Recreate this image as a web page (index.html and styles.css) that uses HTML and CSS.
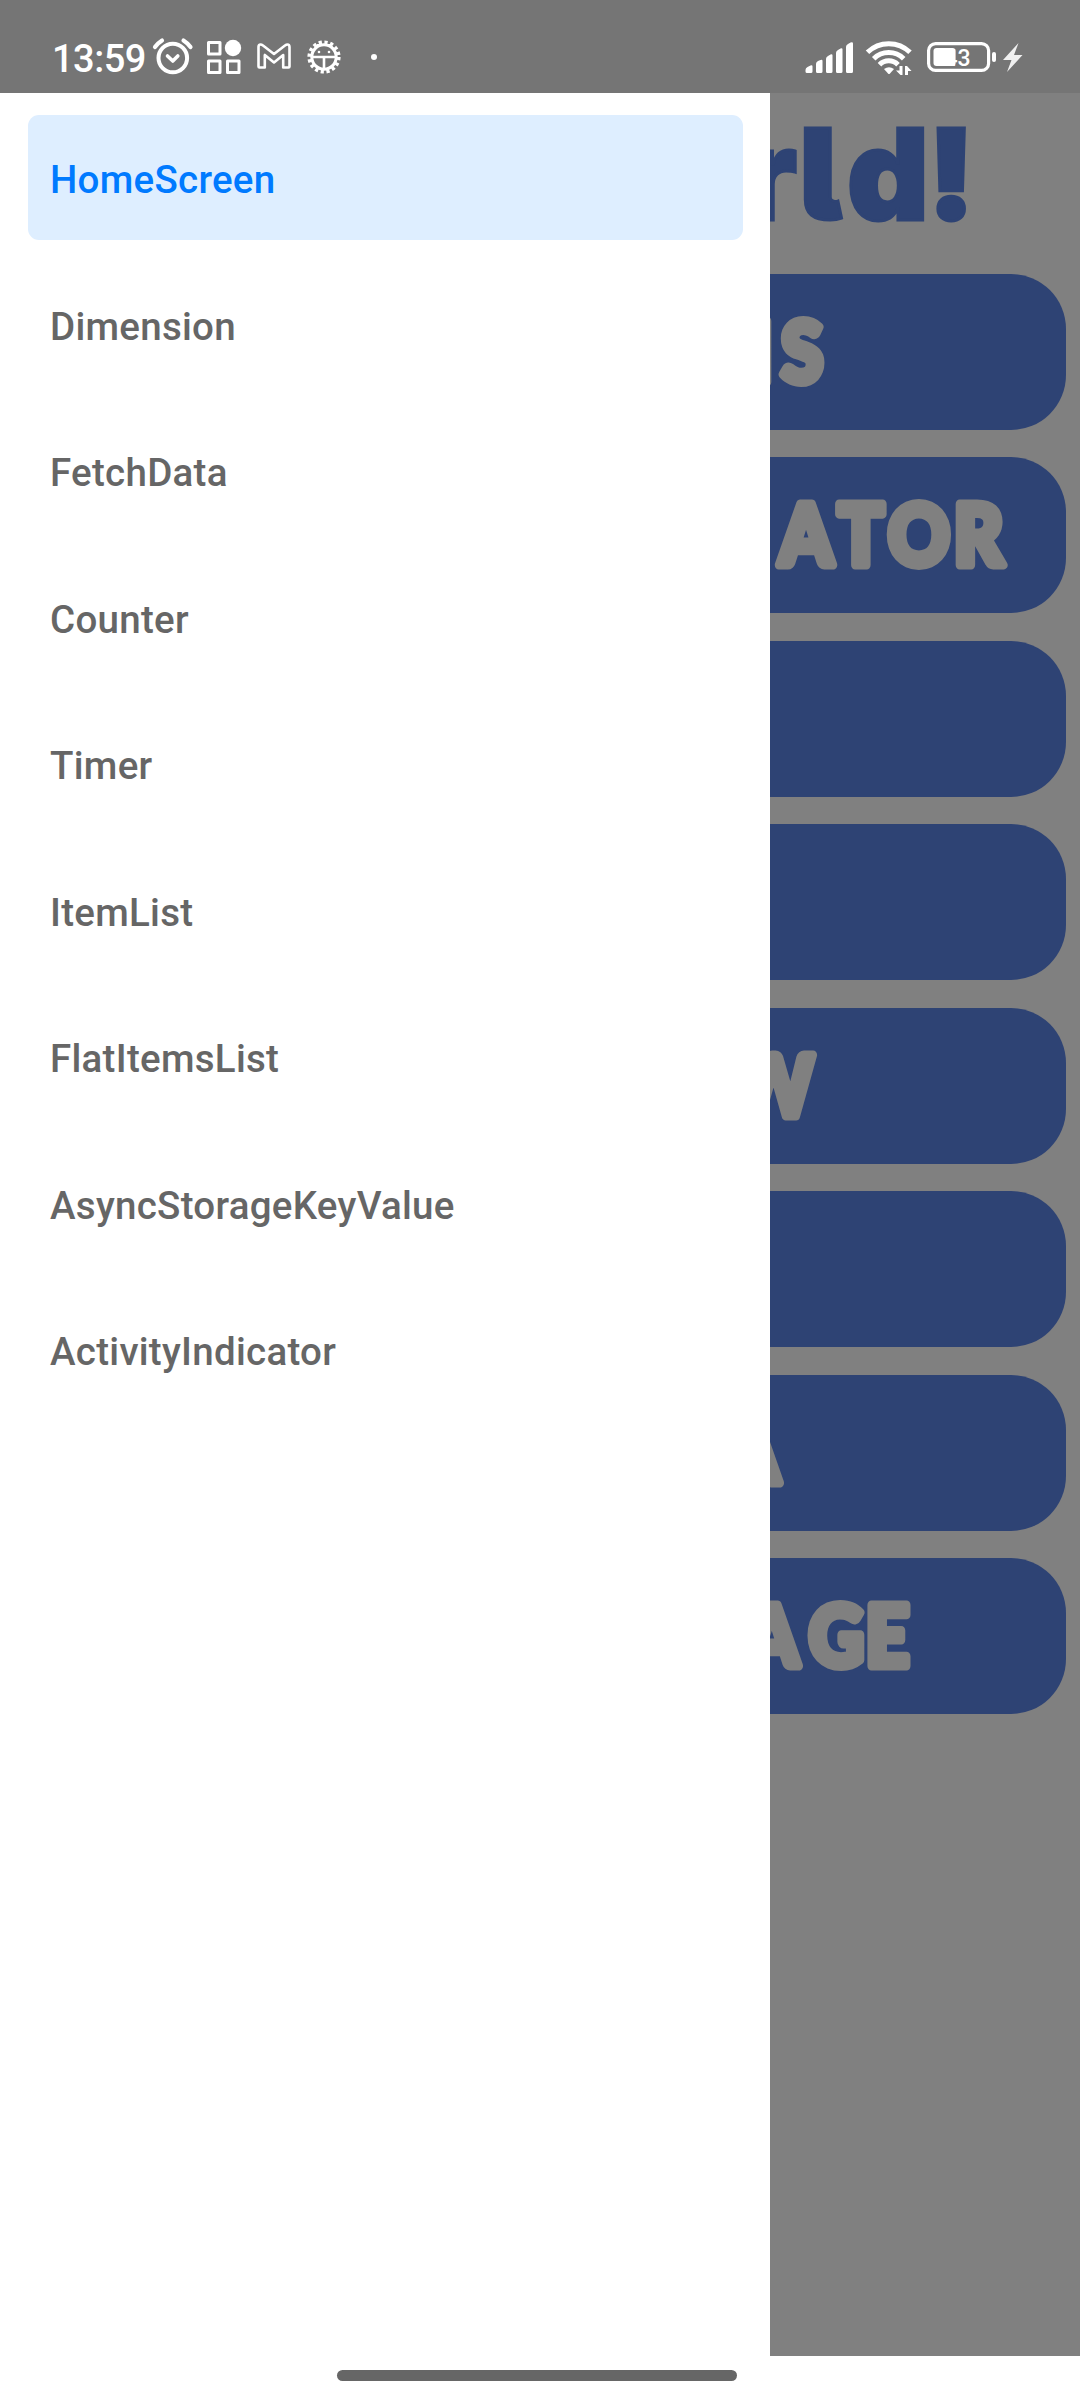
FILE: index.html
```html
<!DOCTYPE html>
<html lang="en">
<head>
<meta charset="utf-8">
<title>HomeScreen</title>
<link rel="stylesheet" href="styles.css">
</head>
<body>
<div class="phone">
  <header class="status">
    <div class="status-left">
      <span class="clock">13:59</span>
      <svg class="ico" width="42" height="93" viewBox="152 0 42 93"><g fill="none" stroke="#fff" stroke-linecap="round"><circle cx="172.8" cy="58" r="14.300" stroke-width="4"/><path d="M155 47q3-4 7-6.500M190.500 47q-3-4-7-6.500" stroke-width="4.200"/><path d="M167.500 56l5.300 5 5-5" stroke-width="3.600" stroke-linejoin="round"/></g></svg>
      <svg class="ico" width="36" height="93" viewBox="206 0 36 93"><g fill="none" stroke="#fff" stroke-width="3" stroke-linejoin="round"><path d="M208.500 42.500h11.500v11.500h-11.500zM208.500 61h11.500v11.500h-11.500zM227.500 61h11.500v11.500h-11.500z"/></g><circle cx="233" cy="48" r="8.200" fill="#fff"/></svg>
      <svg class="ico ico-mail" width="36" height="93" viewBox="256 0 36 93"><path d="M259.500 67.500a1 1 0 0 1-1-1V47q0-2.500 2-2.500 1.200 0 2.500 1L274 54l11-8.500q1.300-1 2.500-1 2 0 2 2.500v19.500a1 1 0 0 1-1 1h-5.300V55L274 62.500 264.800 55v12.500z" fill="none" stroke="#fff" stroke-width="2.600" stroke-linejoin="round"/></svg>
      <svg class="ico ico-bug" width="36" height="93" viewBox="306 0 36 93"><g fill="none" stroke="#fff"><circle cx="324" cy="57" r="12.200" stroke-width="3"/><circle cx="324" cy="57" r="14.800" stroke-width="3.600" stroke-dasharray="3.200 2.612"/><path d="M311 57h26M324 57v13" stroke-width="2.600"/></g><path d="M313 50q4-5 11-5t11 5l-4-6h-14z" fill="#fff"/><circle cx="319" cy="52" r="1.300" fill="#fff"/><circle cx="329" cy="52" r="1.300" fill="#fff"/></svg>
      <span class="dot"></span>
    </div>
    <div class="status-right">
      <svg class="ico" width="49" height="93" viewBox="805 0 49 93"><path fill="#fff" d="M805.500 70q0-2 2-3l3-1.500q2-1 2 1v5q0 1.500-1.500 1.500h-4q-1.500 0-1.500-1.500zM816 64q0-2 2-3l2.500-1q2-1 2 1v10.500q0 1.500-1.500 1.500h-3.500q-1.500 0-1.500-1.500zM826 59q0-2 2-3l2.500-1.500q2-1 2 1v16q0 1.500-1.500 1.500h-3.500q-1.500 0-1.500-1.500zM836 53q0-2 2-3l2.500-1.500q2-1 2 1v22q0 1.500-1.500 1.500h-3.500q-1.500 0-1.500-1.500zM846 47q0-2 2-3l2.500-1.500q2.500-1 2.500 1v28q0 1.500-1.500 1.500h-4q-1.500 0-1.500-1.500z"/></svg>
      <svg class="ico ico-wifi" width="48" height="93" viewBox="865 0 48 93"><g fill="none" stroke="#fff" stroke-width="5"><path d="M867.500 52.300a30.500 30.500 0 0 1 42.500 0"/><path d="M873.700 58.800a21.300 21.300 0 0 1 30 0"/><path d="M879.500 64.700a13 13 0 0 1 18.500 0"/></g><path d="M884 69q5-3.500 10 0l-4 4.500q-1 1-2 0z" fill="#fff"/><path d="M902.500 66v9h-2l-4.500-4.500h3.500V66zM905 75v-9h2l4.500 5H908v4z" fill="#fff"/></svg>
      <svg class="ico ico-battery" width="70" height="93" viewBox="927 0 70 93"><rect x="928.600" y="43.600" width="60" height="26.800" rx="7" fill="none" stroke="#fff" stroke-width="3.200"/><rect x="933.500" y="48" width="22" height="18" rx="3" fill="#fff"/><rect x="992" y="52" width="4" height="10" rx="2" fill="#fff"/><text class="charge" x="944.500" y="66">43</text></svg>
      <svg class="ico ico-bolt" width="20" height="93" viewBox="1003 0 20 93"><path d="M1018.500 43l-15.500 17h8.500l-4.500 12 15.500-17h-8.500z" fill="#f0f0f0"/></svg>
    </div>
  </header>
  <div class="stage">
    <nav class="drawer">
      <a class="item active">HomeScreen</a>
      <a class="item">Dimension</a>
      <a class="item">FetchData</a>
      <a class="item">Counter</a>
      <a class="item">Timer</a>
      <a class="item">ItemList</a>
      <a class="item">FlatItemsList</a>
      <a class="item">AsyncStorageKeyValue</a>
      <a class="item">ActivityIndicator</a>
    </nav>
    <main class="home">
      <svg class="title" width="310" height="181" viewBox="770 93 310 181"><text class="hello" transform="translate(0 219.500)" x="742 799 847 927">rld!</text></svg>
      <div class="cards">
        <div class="card"><svg class="label" width="296" height="156" viewBox="770 274 296 156"><text class="caps" transform="translate(0 381.500) scale(.9 1)" x="794 868">NS</text></svg></div>
        <div class="card"><svg class="label" width="296" height="156" viewBox="770 274 296 156"><text class="caps" transform="translate(0 381.500) scale(.9 1)" x="796 866 931 987 1060">CATOR</text></svg></div>
        <div class="card"></div>
        <div class="card"></div>
        <div class="card"><svg class="label" width="296" height="156" viewBox="770 274 296 156"><text class="caps" transform="translate(0 381.500) scale(.9 1)" x="815">W</text></svg></div>
        <div class="card"></div>
        <div class="card"><svg class="label" width="296" height="156" viewBox="770 274 296 156"><text class="caps" transform="translate(0 381.500) scale(.9 1)" x="807">A</text></svg></div>
        <div class="card"><svg class="label" width="296" height="156" viewBox="770 274 296 156"><text class="caps" transform="translate(0 381.500) scale(.9 1)" x="828 899 962">AGE</text></svg></div>
      </div>
    </main>
  </div>
  <footer class="navbar"><span class="handle"></span></footer>
</div>
</body>
</html>
```
FILE: styles.css
```css
* { box-sizing: border-box; }
body { margin: 0; font-family: Roboto, sans-serif; background: #fff; }
.phone { width: 1080px; height: 2400px; display: flex; flex-direction: column; overflow: hidden; }
svg { display: block; flex: none; overflow: hidden; }
.status { height: 93px; flex: none; background: #757575; display: flex; justify-content: space-between; padding: 0 57px 0 52px; }
.status-left, .status-right { display: flex; align-items: center; }
.clock { width: 100px; margin-top: 24px; font-size: 38px; font-weight: 500; line-height: 44px; color: #fff; letter-spacing: -0.5px; }
.ico + .ico { margin-left: 12px; }
.ico + .ico-mail, .ico + .ico-bug { margin-left: 14px; }
.dot { width: 6px; height: 6px; margin: 21px 0 0 29px; border-radius: 50%; background: #fff; }
.ico + .ico-wifi { margin-left: 11px; }
.ico + .ico-battery { margin-left: 14px; }
.ico + .ico-bolt { margin-left: 6px; }
.charge { font: 500 23px Roboto, sans-serif; fill: #fff; }
.stage { height: 2263px; flex: none; display: flex; }
.drawer { width: 770px; flex: none; background: #fff; padding: 22px 27px 0 28px; display: flex; flex-direction: column; gap: 21.5px; }
.item { height: 125px; flex: none; padding-left: 22px; border-radius: 11px; font-size: 38.5px; font-weight: 500; line-height: 129px; letter-spacing: 0.28px; color: #666; white-space: nowrap; }
.active { background: #deeeff; color: #007aff; }
.home { flex: 1; background: #808080; }
.cards { display: flex; flex-direction: column; gap: 27.43px; padding-right: 14px; }
.card { height: 156px; flex: none; background: #2e4374; border-radius: 0 55px 55px 0; }
.hello { font: 900 127px Inter, sans-serif; font-feature-settings: "cv05"; fill: #2e4374; stroke: #2e4374; stroke-width: 3px; }
.caps { font: 900 84px Lato, sans-serif; fill: #808080; stroke: #808080; stroke-width: 9px; stroke-linejoin: round; }
.navbar { height: 44px; flex: none; display: flex; justify-content: center; padding-top: 14px; background: #fff; }
.handle { width: 400px; height: 11px; margin-right: 6px; border-radius: 6px; background: #666; }
```
